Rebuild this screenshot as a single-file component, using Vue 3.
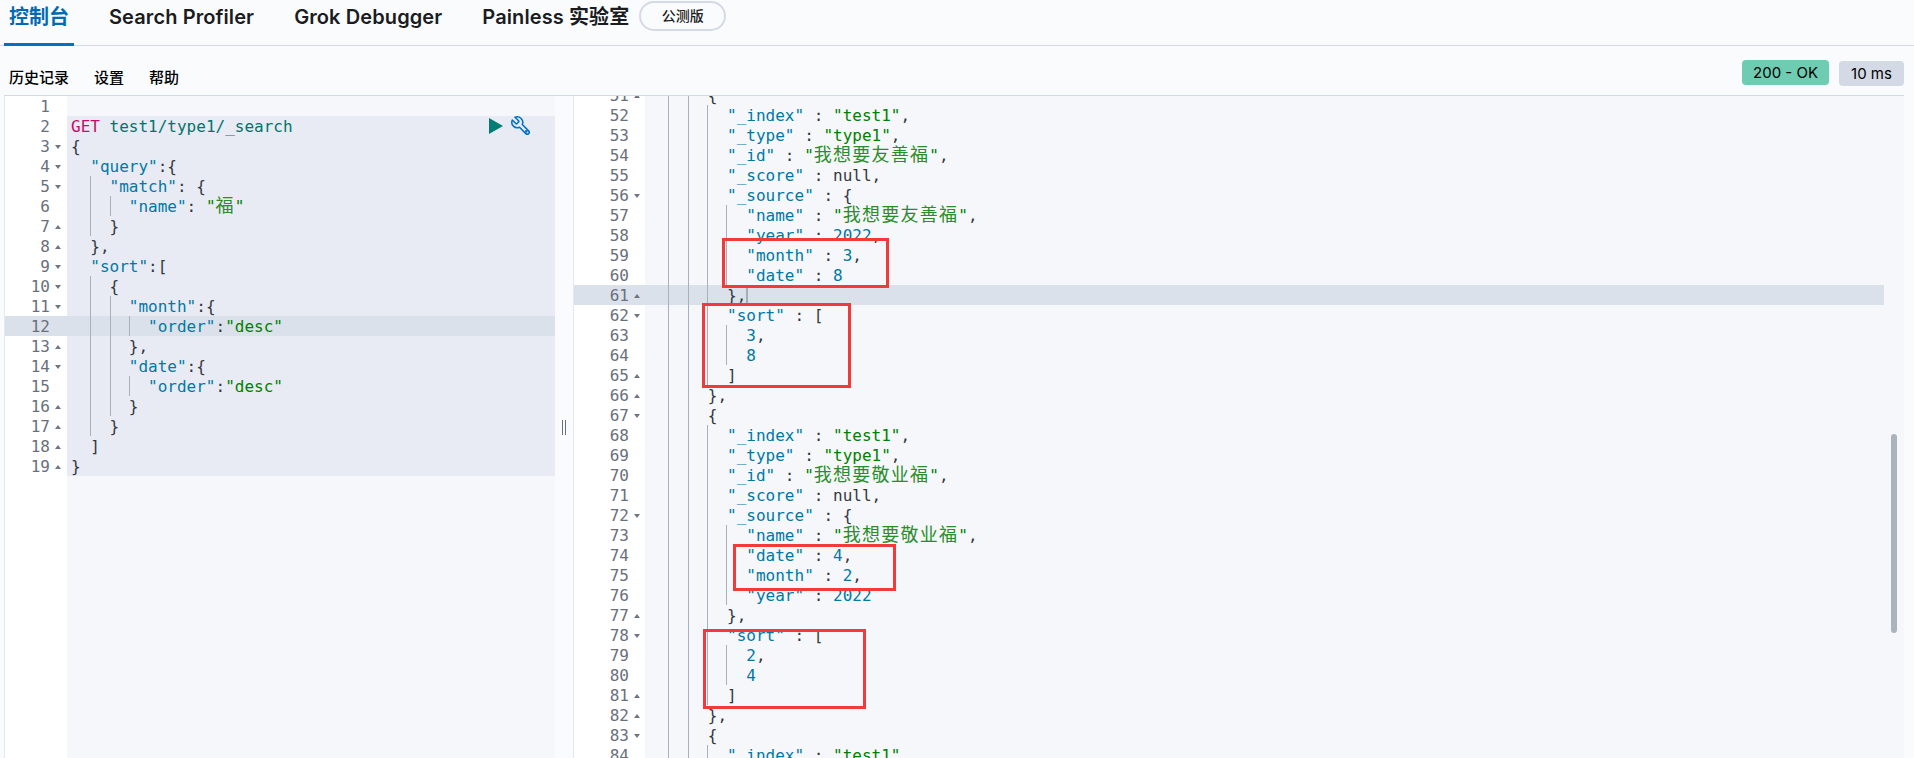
<script setup>
const leftRaw = [
  '',
  'GET test1/type1/_search',
  '{',
  '  "query":{',
  '    "match": {',
  '      "name": "福"',
  '    }',
  '  },',
  '  "sort":[',
  '    {',
  '      "month":{',
  '        "order":"desc"',
  '      },',
  '      "date":{',
  '        "order":"desc"',
  '      }',
  '    }',
  '  ]',
  '}'
]
const leftFold = { 3: 'd', 4: 'd', 5: 'd', 7: 'u', 8: 'u', 9: 'd', 10: 'd', 11: 'd', 13: 'u', 14: 'd', 16: 'u', 17: 'u', 18: 'u', 19: 'u' }

const doc = (name, body) => [
  '      {',
  '        "_index" : "test1",',
  '        "_type" : "type1",',
  `        "_id" : "${name}",`,
  '        "_score" : null,',
  '        "_source" : {',
  `          "name" : "${name}",`,
  ...body,
  '        },'
]
const rightRaw = [
  ...doc('我想要友善福', ['          "year" : 2022,', '          "month" : 3,', '          "date" : 8']),
  '        "sort" : [',
  '          3,',
  '          8',
  '        ]',
  '      },',
  ...doc('我想要敬业福', ['          "date" : 4,', '          "month" : 2,', '          "year" : 2022']),
  '        "sort" : [',
  '          2,',
  '          4',
  '        ]',
  '      },',
  '      {',
  '        "_index" : "test1",'
]
const rightFold = { 51: 'u', 56: 'd', 61: 'u', 62: 'd', 65: 'u', 66: 'u', 67: 'd', 72: 'd', 77: 'u', 78: 'd', 81: 'u', 82: 'u', 83: 'd' }

const tokenise = (text) => {
  const out = []
  const re = /("(?:[^"]*)")(\s*:)?|(\b\d+\b)|(\bGET\b)|(test1\/type1\/_search)/g
  let last = 0
  let m
  const pushStr = (s) => {
    s.split(/([\u4e00-\u9fff]+)/).forEach((part) => {
      if (part) out.push({ cls: /[\u4e00-\u9fff]/.test(part) ? 'str cjk' : 'str', text: part })
    })
  }
  while ((m = re.exec(text))) {
    if (m.index > last) out.push({ cls: '', text: text.slice(last, m.index) })
    if (m[1] && m[2]) {
      out.push({ cls: 'key', text: m[1] })
      out.push({ cls: '', text: m[2] })
    } else if (m[1]) pushStr(m[1])
    else if (m[3]) out.push({ cls: 'num', text: m[3] })
    else if (m[4]) out.push({ cls: 'verb', text: m[4] })
    else out.push({ cls: 'url', text: m[5] })
    last = re.lastIndex
  }
  if (last < text.length) out.push({ cls: '', text: text.slice(last) })
  return out
}

const build = (raw, fold, start) =>
  raw.map((line, i) => {
    const n = i + start
    const indent = line.match(/^ */)[0].length
    return {
      n,
      fold: fold[n] || '',
      plain: indent >= 2,
      guides: Math.max(0, Math.floor((indent - 1) / 2)),
      tokens: tokenise(line.slice(indent))
    }
  })

const leftLines = build(leftRaw, leftFold, 1)
const rightLines = build(rightRaw, rightFold, 51)
</script>

<template>
  <div class="page">
    <nav class="tabs">
      <a class="tab active">控制台</a>
      <a class="tab">Search Profiler</a>
      <a class="tab">Grok Debugger</a>
      <a class="tab last">Painless 实验室</a>
      <span class="beta">公测版</span>
    </nav>

    <div class="toolbar">
      <a class="tool">历史记录</a>
      <a class="tool">设置</a>
      <a class="tool">帮助</a>
      <span class="spacer"></span>
      <span class="badge ok">200 - OK</span>
      <span class="badge ms">10 ms</span>
    </div>

    <main class="main">
      <section class="pane left">
        <div class="gutter">
          <div v-for="l in leftLines" :key="l.n" class="num-row" :class="{ current: l.n === 12 }">
            <span class="n">{{ l.n }}</span>
            <i class="fold" :class="l.fold"></i>
          </div>
        </div>
        <div class="code">
          <div
            v-for="l in leftLines"
            :key="l.n"
            class="line"
            :class="{ selected: l.n >= 2, current: l.n === 12 }"
          >
            <span v-if="l.plain" class="ind"></span>
            <span v-for="g in l.guides" :key="g" class="ind guide"></span>
            <span v-for="(t, i) in l.tokens" :key="i" :class="t.cls">{{ t.text }}</span>
          </div>
          <div class="actions">
            <svg class="play" viewBox="0 0 14 16" width="14" height="16"><path d="M0 0 L14 8 L0 16 Z" fill="#017d73" /></svg>
            <svg class="wrench" viewBox="0 0 24 24" width="22" height="22" fill="none" stroke="#0071c2" stroke-width="1.7" stroke-linejoin="round">
              <path d="M9.3 6.3a1 1 0 0 1 0 1.4L7.7 9.3a1 1 0 0 1-1.4 0L2.5 5.5a6 6 0 0 0 7.9 7.9l6.9 6.9a2.1 2.1 0 0 0 3-3l-6.9-6.9a6 6 0 0 0-7.9-7.9z" />
              <circle cx="17.8" cy="17.8" r="0.6" fill="#0071c2" />
            </svg>
          </div>
        </div>
      </section>

      <div class="divider"><span class="grip"></span></div>

      <section class="pane right">
        <div class="gutter">
          <div class="scroll">
            <div v-for="l in rightLines" :key="l.n" class="num-row" :class="{ current: l.n === 61 }">
              <span class="n">{{ l.n }}</span>
              <i class="fold" :class="l.fold"></i>
            </div>
          </div>
        </div>
        <div class="code">
          <div class="scroll">
            <div v-for="l in rightLines" :key="l.n" class="line" :class="{ current: l.n === 61 }">
              <span v-if="l.plain" class="ind"></span>
              <span v-for="g in l.guides" :key="g" class="ind guide"></span>
              <span v-for="(t, i) in l.tokens" :key="i" :class="t.cls">{{ t.text }}</span>
              <span v-if="l.n === 61" class="caret"></span>
            </div>
          </div>
        </div>
        <div class="track"><span class="thumb"></span></div>
      </section>
    </main>

    <span class="mark m1"></span>
    <span class="mark m2"></span>
    <span class="mark m3"></span>
    <span class="mark m4"></span>
  </div>
</template>

<style>
html, body { margin: 0; background: #fafbfd; }
</style>

<style scoped>
.page {
  position: relative;
  width: 1914px;
  height: 758px;
  overflow: hidden;
  background: #fafbfd;
  font-family: Inter, "Noto Sans CJK SC", sans-serif;
  color: #1a1c21;
  display: flex;
  flex-direction: column;
}
.tabs {
  height: 45px;
  box-sizing: content-box;
  border-bottom: 1px solid #d3dae6;
  display: flex;
  align-items: center;
  padding-left: 4px;
  flex: none;
}
.tab {
  font-size: 20px;
  font-weight: 600;
  letter-spacing: 0.1px;
  padding: 0 5px;
  margin-right: 30px;
  height: 45px;
  line-height: 32px;
  box-sizing: border-box;
  white-space: nowrap;
  border-bottom: 3px solid transparent;
  margin-bottom: -1px;
}
.tab.active {
  color: #006bb4;
  border-bottom-color: #0071c2;
  letter-spacing: 0;
}
.tab.last { margin-right: 5px; }
.beta {
  width: 87px;
  height: 30px;
  margin-top: -13px;
  box-sizing: border-box;
  border: 2px solid #d3dae6;
  border-radius: 15px;
  font-size: 14px;
  font-weight: 500;
  text-align: center;
  line-height: 26px;
}
.toolbar {
  height: 49px;
  flex: none;
  display: flex;
  align-items: center;
  padding: 0 10px 0 9px;
  box-sizing: border-box;
}
.tool {
  font-size: 15px;
  font-weight: 500;
  color: #000;
  margin-right: 25px;
  margin-top: 11px;
}
.spacer { flex: 1; }
.badge {
  height: 25px;
  border-radius: 4px;
  font-size: 15px;
  line-height: 25px;
  text-align: center;
  color: #000;
}
.ok { width: 87px; background: #6dccb1; margin-right: 10px; margin-top: 3px; }
.ms { width: 65px; background: #d3dae6; margin-top: 5px; }
.main {
  flex: 1;
  min-height: 0;
  display: flex;
  margin: 0 10px 0 4px;
  border-top: 1px solid #d3dae6;
  font-family: "DejaVu Sans Mono", "Noto Sans CJK SC", monospace;
  font-size: 16px;
  line-height: 20px;
  color: #343741;
}
.pane { display: flex; overflow: hidden; min-height: 0; }
.left { width: 551px; flex: none; border-left: 1px solid #e4e8f0; box-sizing: border-box; }
.right { flex: 1; border-left: 1px solid #e4e8f0; background: #f5f7fa; }
.gutter { flex: none; background: #fff; color: #69707d; overflow: hidden; }
.left .gutter { width: 62px; }
.right .gutter { width: 71px; }
.scroll { margin-top: -11px; }
.num-row {
  height: 20px;
  box-sizing: border-box;
  padding-top: 1px;
  display: flex;
  align-items: center;
  justify-content: flex-end;
  padding-right: 5px;
}
.right .num-row { padding-right: 4px; }
.num-row.current { background: #dbe1ea; }
.n { margin-right: 4px; }
.fold { width: 8px; height: 6px; display: block; position: relative; }
.fold.d::after, .fold.u::after {
  content: "";
  position: absolute;
  left: 0.5px;
  border-left: 3.5px solid transparent;
  border-right: 3.5px solid transparent;
}
.fold.d::after { top: 1px; border-top: 4px solid #6f7682; }
.fold.u::after { top: 1px; border-bottom: 4px solid #6f7682; }
.code {
  flex: 1;
  min-width: 0;
  position: relative;
  background: #f5f7fa;
  overflow: hidden;
}
.line {
  height: 19px;
  padding-top: 1px;
  padding-left: 4px;
  white-space: pre;
  display: block;
}
.right .line { padding-left: 5px; }
.line.selected { background: #e8ebf3; }
.line.current { background: #dbe1ea; }
.ind { display: inline-block; width: 2ch; height: 20px; vertical-align: top; margin-top: -1px; }
.guide { box-shadow: inset 1px 0 0 #a9b0bd; }
.right .guide { box-shadow: -1px 0 0 #a9b0bd; }
.caret {
  display: inline-block;
  width: 2px;
  height: 20px;
  margin-top: -1px;
  background: #a7adb8;
  vertical-align: top;
}
.verb { color: #c80a68; }
.url { color: #00756c; }
.key { color: #0079a5; }
.str { color: #008000; }
.num { color: #0079a5; }
.cjk { font-size: 18px; line-height: 0; letter-spacing: 1.26px; color: #2a8c2a; }
.actions {
  position: absolute;
  top: 19px;
  left: 422px;
  display: flex;
  align-items: center;
  gap: 7px;
}
.divider {
  width: 18px;
  flex: none;
  position: relative;
  display: flex;
  align-items: center;
  justify-content: center;
}
.grip {
  width: 2px;
  height: 15px;
  border-left: 1px solid #69707d;
  border-right: 1px solid #69707d;
  box-sizing: content-box;
}
.right .code { flex: 1; }
.track { width: 20px; flex: none; display: flex; justify-content: center; align-items: flex-start; }
.thumb { width: 6px; height: 199px; margin-top: 338px; border-radius: 3px; background: #adb3bc; }
.mark {
  position: absolute;
  box-sizing: border-box;
  border: 3px solid #f33a3a;
}
.m1 { left: 722px; top: 238px; width: 167px; height: 50px; }
.m2 { left: 702px; top: 303px; width: 149px; height: 85px; }
.m3 { left: 733px; top: 544px; width: 163px; height: 47px; }
.m4 { left: 703px; top: 629px; width: 163px; height: 80px; }
</style>
